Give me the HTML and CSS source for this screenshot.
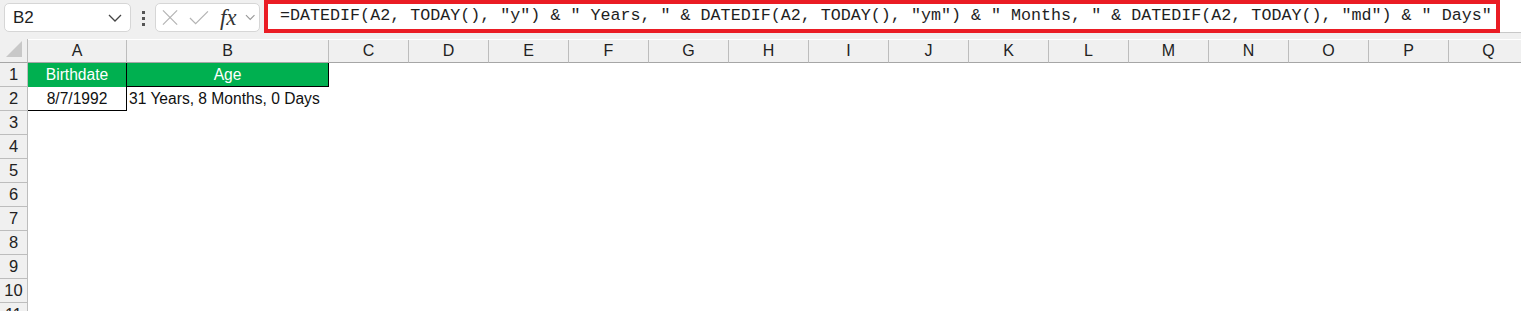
FILE: index.html
```html
<!doctype html>
<html>
	<head>
		<meta charset="utf-8" />
		<title>Age from birthdate</title>
		<link rel="stylesheet" href="styles.css">
	</head>
	<body>
		<div class="toolbar">
			<div class="namebox">
				<span>B2</span>
				<svg width="14" height="8" viewBox="0 0 14 8"><path d="M1 1 L7 7 L13 1" fill="none" stroke="#444" stroke-width="1.3"/></svg>
			</div>
			<div class="grip"><i></i><i></i><i></i></div>
			<div class="fxbox">
				<svg width="17" height="17" viewBox="0 0 17 17"><path d="M1 1 L16 16 M16 1 L1 16" stroke="#b4b4b4" stroke-width="1.3"/></svg>
				<svg width="21" height="16" viewBox="0 0 21 16"><path d="M1 8 L7 14 L20 1" fill="none" stroke="#b4b4b4" stroke-width="1.3"/></svg>
				<span class="fx">fx</span>
				<svg width="11" height="7" viewBox="0 0 11 7"><path d="M1 1 L5.5 5.5 L10 1" fill="none" stroke="#999" stroke-width="1.2"/></svg>
			</div>
			<div class="formula">
				<div class="mark">=DATEDIF(A2, TODAY(), "y") &amp; " Years, " &amp; DATEDIF(A2, TODAY(), "ym") &amp; " Months, " &amp; DATEDIF(A2, TODAY(), "md") &amp; " Days"</div>
			</div>
		</div>

		<div class="sheet">
			<div class="corner"><svg width="17" height="17" viewBox="0 0 17 17"><path d="M16 0 L16 16 L0 16 Z" fill="#c8c8c8"/></svg></div>
			<div class="colhead">A</div>
			<div class="colhead">B</div>
			<div class="colhead">C</div>
			<div class="colhead">D</div>
			<div class="colhead">E</div>
			<div class="colhead">F</div>
			<div class="colhead">G</div>
			<div class="colhead">H</div>
			<div class="colhead">I</div>
			<div class="colhead">J</div>
			<div class="colhead">K</div>
			<div class="colhead">L</div>
			<div class="colhead">M</div>
			<div class="colhead">N</div>
			<div class="colhead">O</div>
			<div class="colhead">P</div>
			<div class="colhead">Q</div>

			<div class="rowhead">1</div>
			<div class="cell head edge">Birthdate</div>
			<div class="cell head edge under">Age</div>
			<div class="blank"></div>

			<div class="rowhead">2</div>
			<div class="cell center edge under">8/7/1992</div>
			<div class="cell">31 Years, 8 Months, 0 Days</div>
			<div class="blank"></div>

			<div class="rowhead">3</div><div class="blank"></div>
			<div class="rowhead">4</div><div class="blank"></div>
			<div class="rowhead">5</div><div class="blank"></div>
			<div class="rowhead">6</div><div class="blank"></div>
			<div class="rowhead">7</div><div class="blank"></div>
			<div class="rowhead">8</div><div class="blank"></div>
			<div class="rowhead">9</div><div class="blank"></div>
			<div class="rowhead">10</div><div class="blank"></div>
			<div class="rowhead">11</div><div class="blank"></div>
		</div>
	</body>
</html>
```

FILE: styles.css
```css
body {
	margin: 0;
	background: #fff;
	font-family: "Liberation Sans", Arial, sans-serif;
	color: #1e1e1e;
	overflow: hidden;
}

.toolbar {
	display: flex;
	align-items: flex-start;
	height: 39px;
	background: #f0f0f0;
}

.namebox {
	display: flex;
	align-items: center;
	justify-content: space-between;
	box-sizing: border-box;
	width: 127px;
	height: 29px;
	margin: 3px 0 0 4px;
	padding: 0 8px 0 8px;
	background: #fff;
	border: 1px solid #d6d6d6;
	border-radius: 5px;
	font-size: 17px;
}

.grip {
	display: flex;
	flex-direction: column;
	gap: 3px;
	margin: 11px 10px 0 11px;
}

.grip i {
	display: block;
	width: 3px;
	height: 3px;
	background: #555;
}

.fxbox {
	display: flex;
	align-items: center;
	box-sizing: border-box;
	width: 105px;
	height: 29px;
	margin-top: 3px;
	padding: 0 4px 0 6px;
	gap: 11px;
	background: #fff;
	border: 1px solid #d6d6d6;
	border-radius: 5px;
}

.fxbox .fx {
	font-family: "Liberation Serif", "Times New Roman", serif;
	font-style: italic;
	font-size: 23px;
	line-height: 20px;
	color: #333;
	margin-right: -3px;
}

.formula {
	flex: 1;
	height: 32px;
	margin-left: 4px;
	background: #fff;
	border-bottom: 1px solid #c8c8c8;
}

.mark {
	box-sizing: border-box;
	width: 1236px;
	height: 33px;
	border: 4px solid #ea1c24;
	padding: 0 0 0 12px;
	font-family: "Liberation Mono", "Courier New", monospace;
	font-size: 16.7px;
	line-height: 24px;
	color: #1e1e1e;
	white-space: pre;
}

.sheet {
	display: grid;
	grid-template-columns: 28px 99px 202px repeat(15, 80px);
	grid-template-rows: 24px repeat(11, 24px);
}

.corner,
.colhead,
.rowhead {
	box-sizing: border-box;
	background: #f0f0f0;
	font-size: 16px;
	color: #222;
}

.corner {
	display: flex;
	align-items: flex-end;
	justify-content: flex-end;
	padding: 0 4px 4px 0;
	border-right: 1px solid #bdbdbd;
	border-bottom: 1px solid #a6a6a6;
}

.colhead {
	display: flex;
	align-items: center;
	justify-content: center;
	margin-top: 1px;
	border-right: 1px solid #bdbdbd;
	border-bottom: 1px solid #a6a6a6;
}

.rowhead {
	display: flex;
	align-items: center;
	justify-content: center;
	border-right: 1px solid #bdbdbd;
	border-bottom: 1px solid #bdbdbd;
	font-size: 16.5px;
}

.cell {
	box-sizing: border-box;
	display: flex;
	align-items: center;
	padding: 0 2px;
	font-size: 15.6px;
	color: #111;
	white-space: nowrap;
}

.head {
	justify-content: center;
	background: #00b050;
	color: #fff;
}

.center {
	justify-content: center;
}

.edge {
	border-right: 1px solid #000;
}

.under {
	border-bottom: 1px solid #000;
}

.blank {
	grid-column: span 15;
}

.rowhead + .blank {
	grid-column: span 17;
}
```
